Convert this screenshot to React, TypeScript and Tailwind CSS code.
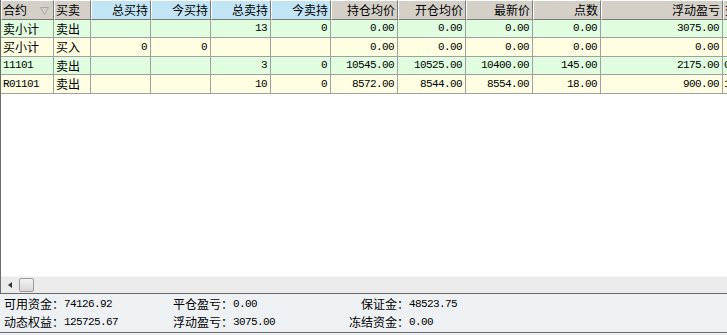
import React from "react";

const cols = [53, 37, 60, 60, 60, 60, 67, 68, 67, 68, 122, 60];
const headers: { t: string; blue?: boolean; left?: boolean; tri?: boolean }[] = [
  { t: "合约", left: true, tri: true },
  { t: "买卖", left: true },
  { t: "总买持", blue: true },
  { t: "今买持", blue: true },
  { t: "总卖持", blue: true },
  { t: "今卖持", blue: true },
  { t: "持仓均价" },
  { t: "开仓均价" },
  { t: "最新价" },
  { t: "点数" },
  { t: "浮动盈亏" },
  { t: "交易所", left: true },
];

const rows: string[][] = [
  ["卖小计", "卖出", "", "", "13", "0", "0.00", "0.00", "0.00", "0.00", "3075.00", ""],
  ["买小计", "买入", "0", "0", "", "", "0.00", "0.00", "0.00", "0.00", "0.00", ""],
  ["11101", "卖出", "", "", "3", "0", "10545.00", "10525.00", "10400.00", "145.00", "2175.00", "0"],
  ["R01101", "卖出", "", "", "10", "0", "8572.00", "8544.00", "8554.00", "18.00", "900.00", "1"],
];

const cjk = { fontFamily: '"Noto Sans CJK SC", "Noto Sans", sans-serif' };
const mono = { fontFamily: '"Liberation Mono", "Noto Sans CJK SC", monospace' };

function isAscii(s: string) {
  return /^[\x00-\x7f]*$/.test(s);
}

function Txt({ s }: { s: string }) {
  if (isAscii(s)) {
    return (
      <span className="text-[11px] tracking-[-0.6px]" style={mono}>
        {s}
      </span>
    );
  }
  return (
    <span className="text-[12px]" style={cjk}>
      {s}
    </span>
  );
}

export default function App() {
  const rowH = [18, 19, 18, 19];
  return (
    <div className="w-[727px] h-[335px] overflow-hidden bg-[#eef1f4] text-black">
      <div className="h-[294px] flex flex-col border-l border-b border-[#6b6b6b] bg-white">
        <div className="flex-1 overflow-hidden">
          <div className="flex w-[800px] h-[20px]">
            {headers.map((h, i) => (
              <div
                key={i}
                style={{ width: cols[i] }}
                className={`shrink-0 h-full flex items-center border-r border-b border-[#7a7a7a] border-t border-t-white border-l border-l-white overflow-hidden whitespace-nowrap ${
                  h.blue ? "bg-[#c2e5f5]" : "bg-[#d4d0c8]"
                } ${h.left ? "justify-start pl-[1px]" : "justify-end pr-[2px]"}`}
              >
                <span className="text-[12px] leading-none" style={cjk}>
                  {h.t}
                </span>
                {h.tri && (
                  <svg width="9" height="8" viewBox="0 0 9 8" className="ml-auto mr-[4px] mt-[2px]">
                    <path d="M0.5 0.5 H8.5 L4.5 7.5 Z" fill="none" stroke="#a8a8a8" strokeWidth="1" />
                  </svg>
                )}
              </div>
            ))}
          </div>
          {rows.map((r, ri) => (
            <div
              key={ri}
              className={`flex w-[800px] ${ri % 2 === 0 ? "bg-[#e0fde0]" : "bg-[#fffde2]"}`}
              style={{ height: rowH[ri] }}
            >
              {r.map((c, ci) => (
                <div
                  key={ci}
                  style={{ width: cols[ci] }}
                  className={`shrink-0 h-full flex items-center border-r border-b border-[#a0a0a0] overflow-hidden whitespace-nowrap ${
                    ci < 2 ? "justify-start pl-[2px]" : ci === 11 ? "justify-start pl-[1px]" : "justify-end pr-[3px]"
                  }`}
                >
                  <Txt s={c} />
                </div>
              ))}
            </div>
          ))}
        </div>
        <div className="h-[17px] bg-[#ebebeb] border-t border-[#f6f6f6] flex items-center">
          <div className="w-[18px] h-full flex items-center justify-center">
            <svg width="4" height="6" viewBox="0 0 4 6">
              <path d="M4 0 L0 3 L4 6 Z" fill="#333" />
            </svg>
          </div>
          <div className="w-[15px] h-[14px] rounded-[2px] border border-[#9c9c9c] bg-gradient-to-b from-[#f2f2f2] to-[#d8d8d8]" />
        </div>
      </div>
      <div className="h-[39px] bg-[#eef1f4] border-b border-[#6b6b6b] flex flex-col justify-center gap-[1px] text-[12px]">
        <div className="flex h-[17px] items-center">
          <div className="w-[173px] pl-[4px] flex items-center">
            <span style={cjk}>可用资金：</span>
            <Txt s="74126.92" />
          </div>
          <div className="w-[175px] flex items-center">
            <span style={cjk}>平仓盈亏：</span>
            <Txt s="0.00" />
          </div>
          <div className="flex items-center">
            <span className="w-[61px] text-right" style={cjk}>保证金：</span>
            <Txt s="48523.75" />
          </div>
        </div>
        <div className="flex h-[17px] items-center">
          <div className="w-[173px] pl-[4px] flex items-center">
            <span style={cjk}>动态权益：</span>
            <Txt s="125725.67" />
          </div>
          <div className="w-[175px] flex items-center">
            <span style={cjk}>浮动盈亏：</span>
            <Txt s="3075.00" />
          </div>
          <div className="flex items-center">
            <span className="w-[61px] text-right" style={cjk}>冻结资金：</span>
            <Txt s="0.00" />
          </div>
        </div>
      </div>
    </div>
  );
}
